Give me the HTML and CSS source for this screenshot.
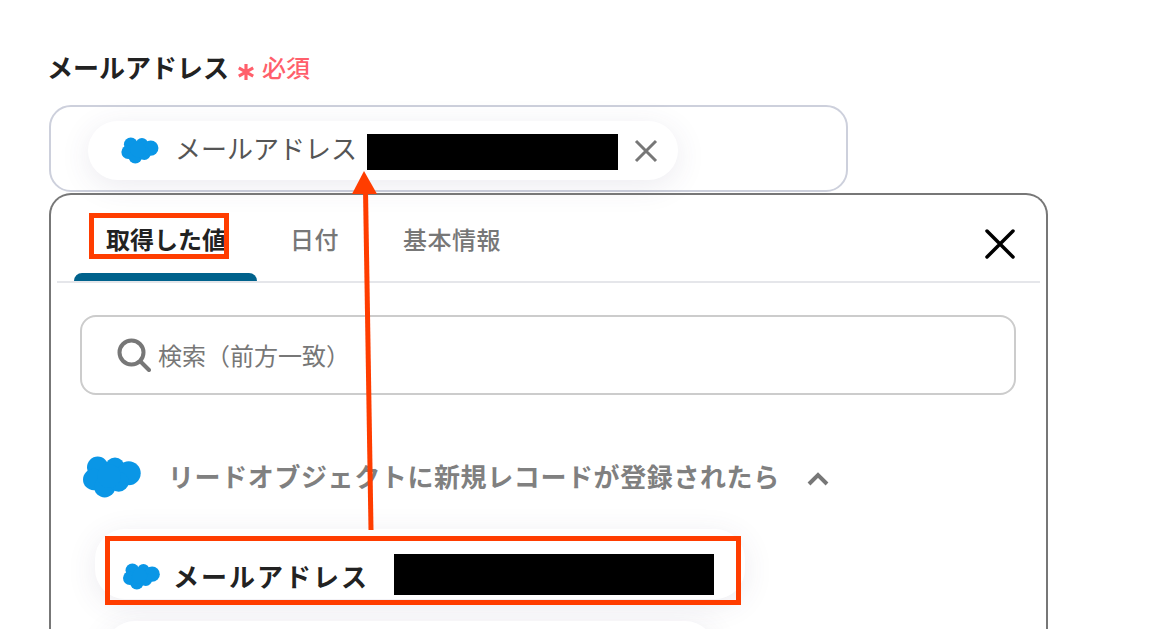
FILE: index.html
```html
<!DOCTYPE html>
<html lang="ja">
<head>
  <meta charset="UTF-8">
  <title>メールアドレス</title>
  <link rel="stylesheet" href="styles.css">
</head>
<body>
  <svg class="defs" width="0" height="0">
    <symbol id="cloud" viewBox="0 0 58 42">
      <circle cx="14.7" cy="11.3" r="10.7"/>
      <circle cx="32" cy="11" r="9.5"/>
      <circle cx="45.7" cy="17.3" r="12"/>
      <circle cx="10.7" cy="23.5" r="10.7"/>
      <circle cx="21.7" cy="30.7" r="10.7"/>
      <circle cx="35.7" cy="25.7" r="10"/>
      <circle cx="26" cy="20" r="12"/>
    </symbol>
  </svg>

  <div class="page">
    <div class="field-label">
      <span class="label-text">メールアドレス</span>
      <svg class="asterisk" viewBox="0 0 20 20"><path d="M10 1v18M2 5.500l16 9M18 5.500l-16 9"/></svg>
      <span class="required">必須</span>
    </div>

    <div class="field">
      <div class="chip">
        <svg class="cloud-small"><use href="#cloud"/></svg>
        <span class="chip-text">メールアドレス</span>
        <span class="redact redact-chip"></span>
        <svg class="chip-close" viewBox="0 0 24 24"><path d="M2 2l20 20M22 2L2 22"/></svg>
      </div>
    </div>

    <div class="panel">
      <div class="tabs">
        <div class="tab active">取得した値</div>
        <div class="tab tab-date">日付</div>
        <div class="tab">基本情報</div>
        <svg class="panel-close" viewBox="0 0 30 30"><path d="M2 2l26 26M28 2L2 28"/></svg>
      </div>

      <div class="search">
        <svg class="search-icon" viewBox="0 0 34 34"><circle cx="14.500" cy="14.500" r="12"/><path d="M23.500 23.500l8.500 8.500"/></svg>
        <span class="search-text">検索（前方一致）</span>
      </div>

      <div class="group">
        <svg class="cloud-large"><use href="#cloud"/></svg>
        <span class="group-title">リードオブジェクトに新規レコードが登録されたら</span>
        <svg class="chevron" viewBox="0 0 22 14"><path d="M2 12l9-9 9 9"/></svg>
      </div>

      <div class="row">
        <svg class="cloud-small"><use href="#cloud"/></svg>
        <span class="row-text">メールアドレス</span>
        <span class="redact redact-row"></span>
      </div>
      <div class="row row-next"></div>
    </div>
  </div>

  <!-- annotations on top of the screenshot -->
  <div class="mark mark-tab"></div>
  <div class="mark mark-row"></div>
  <svg class="arrow" width="1176" height="630">
    <path class="arrow-line" d="M371 530L365.500 190"/>
    <path class="arrow-head" d="M364 171L377 194H352z"/>
  </svg>
</body>
</html>
```

FILE: styles.css
```css
* {
  box-sizing: border-box;
}
html, body {
  margin: 0;
  height: 630px;
  overflow: hidden;
  background: #fff;
}
body {
  position: relative;
  font-family: "Noto Sans CJK JP", "Noto Sans", sans-serif;
  color: #222;
}
.defs {
  position: absolute;
}
.page {
  padding: 49px 0 0 49px;
}
.field-label {
  display: flex;
  align-items: center;
  height: 38px;
  margin-left: -2px;
}
.label-text {
  margin-top: -2px;
  font-size: 26px;
  font-weight: 700;
  line-height: 38px;
}
.asterisk {
  width: 18px;
  height: 18px;
  margin: 8px 7px 0 8px;
  fill: none;
  stroke: #ff5f6b;
  stroke-width: 3.500;
}
.required {
  margin-top: -2px;
  font-size: 24px;
  line-height: 38px;
  font-weight: 500;
  color: #ff5f6b;
}
.field {
  width: 799px;
  height: 87px;
  margin-top: 18px;
  padding: 14px 0 0 37px;
  border: 2px solid #cdd0dc;
  border-radius: 22px;
}
.chip {
  display: flex;
  align-items: center;
  width: 590px;
  height: 59px;
  padding-left: 33px;
  background: #fff;
  border-radius: 30px;
  box-shadow: 0 6px 30px rgba(70, 60, 110, 0.1);
}
.cloud-small {
  flex: none;
  width: 38px;
  height: 27px;
  fill: #0a96e6;
}
.chip-text {
  margin-left: 16px;
  font-size: 26px;
  line-height: 38px;
  margin-top: -6px;
  color: #555;
}
.redact {
  display: block;
  flex: none;
  background: #000;
}
.redact-chip {
  width: 251px;
  height: 36px;
  margin: 2px 0 0 10px;
}
.chip-close {
  width: 24px;
  height: 24px;
  margin-left: 16px;
  fill: none;
  stroke: #777;
  stroke-width: 3;
}
.panel {
  width: 999px;
  height: 436px;
  margin-top: 1px;
  padding: 0 6px 0 6px;
  border: 2px solid #777;
  border-bottom: 0;
  border-radius: 22px 22px 0 0;
  overflow: hidden;
}
.tabs {
  display: flex;
  align-items: flex-start;
  height: 88px;
  border-bottom: 2px solid #e5e6ea;
}
.tab {
  height: 86px;
  padding-top: 26px;
  font-size: 24px;
  line-height: 36px;
  font-weight: 500;
  letter-spacing: 0.500px;
  color: #777;
}
.tab-date {
  margin-right: 64px;
}
.tab.active {
  width: 183px;
  margin-left: 17px;
  margin-right: 33px;
  padding-left: 32px;
  font-weight: 700;
  letter-spacing: 0;
  color: #222;
  position: relative;
}
.tab.active::after {
  content: "";
  position: absolute;
  left: 0;
  right: 0;
  bottom: 0;
  height: 8px;
  background: #00628c;
  border-radius: 8px 8px 0 0;
}
.panel-close {
  width: 30px;
  height: 30px;
  margin: 34px 25px 0 auto;
  fill: none;
  stroke: #000;
  stroke-width: 3.500;
  stroke-linecap: round;
}
.search {
  display: flex;
  align-items: center;
  width: 936px;
  height: 80px;
  margin: 32px 0 0 23px;
  padding-left: 35px;
  border: 2px solid #ccc;
  border-radius: 16px;
  font-size: 24px;
  color: #777;
}
.search-text {
  margin-top: -2px;
}
.search-icon {
  width: 34px;
  height: 34px;
  margin-right: 7px;
  fill: none;
  stroke: #777;
  stroke-width: 4;
  stroke-linecap: round;
}
.group {
  display: flex;
  align-items: center;
  height: 44px;
  margin: 60px 0 0 26px;
}
.cloud-large {
  flex: none;
  width: 58px;
  height: 42px;
  fill: #0a96e6;
}
.group-title {
  margin: -4px 0 0 27px;
  font-size: 26px;
  font-weight: 700;
  letter-spacing: 0.600px;
  color: #808080;
}
.chevron {
  width: 22px;
  height: 14px;
  margin: 4px 0 0 27px;
  fill: none;
  stroke: #777;
  stroke-width: 4;
}
.row {
  display: flex;
  align-items: center;
  width: 650px;
  height: 70px;
  margin: 30px 0 0 38px;
  padding: 19px 0 0 28px;
  background: #fff;
  border-radius: 30px;
  box-shadow: 0 6px 30px rgba(70, 60, 110, 0.1);
}
.row .cloud-small {
  width: 37px;
  margin-top: 6px;
}
.row-text {
  margin: 4px 0 0 13px;
  font-size: 26px;
  font-weight: 700;
  letter-spacing: 2px;
}
.redact-row {
  width: 320px;
  height: 41px;
  margin: 2px 0 0 25px;
}
.row-next {
  width: 610px;
  margin: 22px 0 0 48px;
}
.mark {
  position: absolute;
  border: 5px solid #ff3d00;
}
.mark-tab {
  left: 89px;
  top: 213px;
  width: 140px;
  height: 46px;
}
.mark-row {
  left: 105px;
  top: 536px;
  width: 636px;
  height: 69px;
}
.arrow {
  position: absolute;
  left: 0;
  top: 0;
}
.arrow-line {
  fill: none;
  stroke: #ff3d00;
  stroke-width: 5;
}
.arrow-head {
  fill: #ff3d00;
}
```
